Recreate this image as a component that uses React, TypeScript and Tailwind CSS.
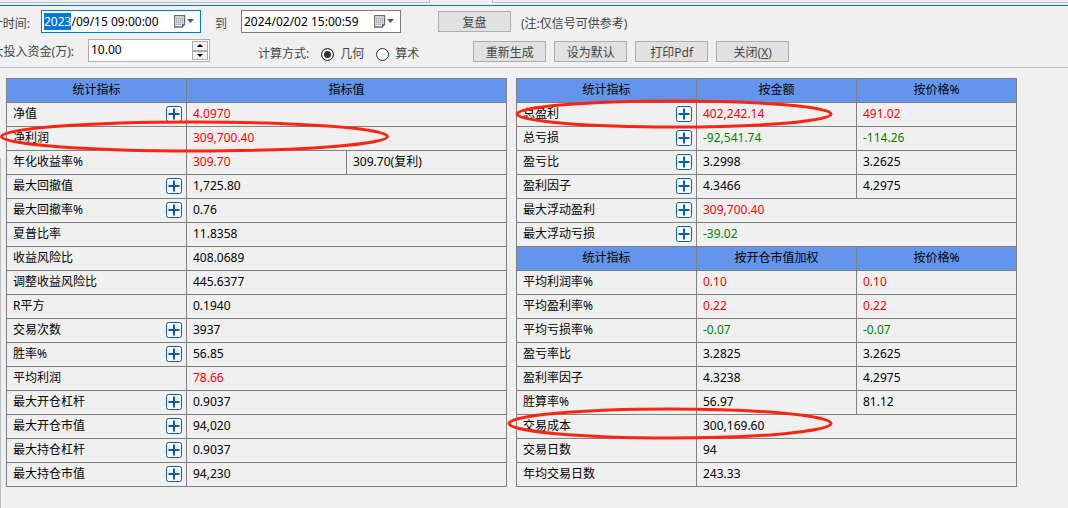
import React, { useEffect, useRef, useState } from 'react'

type Tone = 'up' | 'down'

interface Cell {
  text: string
  tone?: Tone
}

interface Row {
  label: string
  plus?: boolean
  cells: Cell[]
  header?: boolean
}

const up = (text: string): Cell => ({ text, tone: 'up' })
const down = (text: string): Cell => ({ text, tone: 'down' })
const plain = (text: string): Cell => ({ text })

const leftRows: Row[] = [
  { label: '统计指标', header: true, cells: [plain('指标值')] },
  { label: '净值', plus: true, cells: [up('4.0970')] },
  { label: '净利润', cells: [up('309,700.40')] },
  { label: '年化收益率%', cells: [up('309.70'), plain('309.70(复利)')] },
  { label: '最大回撤值', plus: true, cells: [plain('1,725.80')] },
  { label: '最大回撤率%', plus: true, cells: [plain('0.76')] },
  { label: '夏普比率', cells: [plain('11.8358')] },
  { label: '收益风险比', cells: [plain('408.0689')] },
  { label: '调整收益风险比', cells: [plain('445.6377')] },
  { label: 'R平方', cells: [plain('0.1940')] },
  { label: '交易次数', plus: true, cells: [plain('3937')] },
  { label: '胜率%', plus: true, cells: [plain('56.85')] },
  { label: '平均利润', cells: [up('78.66')] },
  { label: '最大开仓杠杆', plus: true, cells: [plain('0.9037')] },
  { label: '最大开仓市值', plus: true, cells: [plain('94,020')] },
  { label: '最大持仓杠杆', plus: true, cells: [plain('0.9037')] },
  { label: '最大持仓市值', plus: true, cells: [plain('94,230')] },
]

const rightRows: Row[] = [
  { label: '统计指标', header: true, cells: [plain('按金额'), plain('按价格%')] },
  { label: '总盈利', plus: true, cells: [up('402,242.14'), up('491.02')] },
  { label: '总亏损', plus: true, cells: [down('-92,541.74'), down('-114.26')] },
  { label: '盈亏比', plus: true, cells: [plain('3.2998'), plain('3.2625')] },
  { label: '盈利因子', plus: true, cells: [plain('4.3466'), plain('4.2975')] },
  { label: '最大浮动盈利', plus: true, cells: [up('309,700.40')] },
  { label: '最大浮动亏损', plus: true, cells: [down('-39.02')] },
  { label: '统计指标', header: true, cells: [plain('按开仓市值加权'), plain('按价格%')] },
  { label: '平均利润率%', cells: [up('0.10'), up('0.10')] },
  { label: '平均盈利率%', cells: [up('0.22'), up('0.22')] },
  { label: '平均亏损率%', cells: [down('-0.07'), down('-0.07')] },
  { label: '盈亏率比', cells: [plain('3.2825'), plain('3.2625')] },
  { label: '盈利率因子', cells: [plain('4.3238'), plain('4.2975')] },
  { label: '胜算率%', cells: [plain('56.97'), plain('81.12')] },
  { label: '交易成本', cells: [plain('300,169.60')] },
  { label: '交易日数', cells: [plain('94')] },
  { label: '年均交易日数', cells: [plain('243.33')] },
]

const toneClass = (tone?: Tone) =>
  tone === 'up' ? 'text-[#ff0000]' : tone === 'down' ? 'text-[#008000]' : 'text-black'

const PlusIcon = () => (
  <svg width="16" height="16" viewBox="0 0 16 16" fill="none">
    <rect x="0.5" y="0.5" width="15" height="15" rx="2" fill="#f7fbff" stroke="#0a5cb0" />
    <path d="M8 2.5v11M2.5 8h11" stroke="#0a5cb0" strokeWidth="2" />
  </svg>
)

const CalendarIcon = () => (
  <svg width="20" height="13" viewBox="0 0 20 13" fill="none">
    <path d="M0.5 0.5h10v9l-2.500 2.500h-7.500z" fill="#f2f0ee" stroke="#756a65" strokeWidth="1.4" />
    <path d="M2 2.500h7v7.500h-7z" fill="#9ca7bb" />
    <path
      d="M2 4.500h7M2 6.500h7M2 8.500h7M3.500 2.500v7.500M5.500 2.500v7.500M7.500 2.500v7.500"
      stroke="#eef1f6"
      strokeWidth="0.5"
    />
    <path d="M8 12v-2.500h2.500z" fill="#5d5551" />
    <path d="M13 4h7l-3.500 4z" fill="#44598c" />
  </svg>
)

const DateBox = ({
  label,
  value,
  active,
}: {
  label: string
  value: string
  active?: boolean
}) => {
  const [date, setDate] = useState(value)
  const ref = useRef<HTMLInputElement>(null)

  // the year part is selected as soon as the panel opens
  useEffect(() => {
    if (active && ref.current) {
      ref.current.focus()
      ref.current.setSelectionRange(0, 4)
    }
  }, [active])

  return (
    <div className="flex h-[23px] w-40 items-center border border-[#7a7a7a] bg-white pl-0.5 focus-within:border-[#0078d7]">
      <input
        ref={ref}
        aria-label={label}
        value={date}
        onChange={(e) => setDate(e.target.value)}
        className="h-[17px] min-w-0 flex-1 bg-transparent text-black outline-none selection:bg-[#0078d7] selection:text-white"
      />
      <button type="button" aria-label="选择日期" className="mr-1.5">
        <CalendarIcon />
      </button>
    </div>
  )
}

const ToolButton = ({ children }: { children: React.ReactNode }) => (
  <button
    type="button"
    className="h-[21px] w-[73px] border border-[#adadad] bg-[#e1e1e1] pt-0.5 leading-[17px] text-[#444444]"
  >
    {children}
  </button>
)

const StatTable = ({ rows }: { rows: Row[] }) => (
  <table className="w-full table-fixed border-collapse text-left">
    <colgroup>
      <col className="w-[180px]" />
      <col />
      <col />
    </colgroup>
    <tbody>
      {rows.map((row, i) =>
        row.header ? (
          <tr key={i} className="h-6 bg-[#6495ed]">
            <th className="border border-[#808080] p-0 pb-0.5 text-center font-normal">
              {row.label}
            </th>
            {row.cells.map((cell, j) => (
              <th
                key={j}
                colSpan={row.cells.length === 1 ? 2 : 1}
                className="border border-[#808080] p-0 pb-0.5 text-center font-normal"
              >
                {cell.text}
              </th>
            ))}
          </tr>
        ) : (
          <tr key={i} className="h-6">
            <th className="border border-[#808080] pt-0 pr-1 pb-0.5 pl-1.5 font-normal">
              <div className="flex items-center justify-between">
                {row.label}
                {row.plus && (
                  <button type="button" aria-label={`展开${row.label}`}>
                    <PlusIcon />
                  </button>
                )}
              </div>
            </th>
            {row.cells.map((cell, j) => (
              <td
                key={j}
                colSpan={row.cells.length === 1 ? 2 : 1}
                className={`border border-[#808080] px-1.5 pt-0 pb-0.5 ${toneClass(cell.tone)}`}
              >
                {cell.text}
              </td>
            ))}
          </tr>
        )
      )}
    </tbody>
  </table>
)

// red pen circles drawn over the rows that matter
const Marks = ({ items }: { items: { cx: number; cy: number; rx: number; ry: number }[] }) => (
  <svg
    className="pointer-events-none absolute inset-0 h-full w-full overflow-visible"
    fill="none"
    stroke="#ff2412"
    strokeWidth="3"
  >
    {items.map((m, i) => (
      <ellipse key={i} cx={m.cx} cy={m.cy} rx={m.rx} ry={m.ry} />
    ))}
  </svg>
)

const App = () => {
  const [capital, setCapital] = useState(10)
  const [method, setMethod] = useState('geo')

  return (
    <div className="flex min-h-screen flex-col overflow-hidden bg-[#f0f0f0] font-['Noto_Sans','Noto_Sans_CJK_SC',sans-serif] text-xs leading-4 text-black">
      <div className="flex h-[5px] justify-between">
        <div className="h-[3px] w-[430px] border-r border-b border-[#bcbcbc]" />
        <div className="ml-[62px] h-[3px] flex-1 border-b border-l border-[#bcbcbc]" />
      </div>

      <div className="h-[63px] border-t border-b border-t-[#1072c2] border-b-[#bcbcbc]">
        <div className="flex items-start pt-1">
          <div className="flex w-[41px] shrink-0 justify-end pt-1.5 pr-[11px] whitespace-nowrap text-[#444444]">
            计时间:
          </div>
          <DateBox label="开始时间" value="2023/09/15 09:00:00" active />
          <div className="w-10 pt-1.5 text-center text-[#444444]">到</div>
          <DateBox label="结束时间" value="2024/02/02 15:00:59" />
          <div className="ml-[37px] pt-px">
            <ToolButton>复盘</ToolButton>
          </div>
          <div className="ml-2.5 pt-1.5 text-[#444444]">(注:仅信号可供参考)</div>
        </div>

        <div className="flex items-start pt-1.5">
          <label
            htmlFor="capital"
            className="flex w-[88px] shrink-0 justify-end pt-[5px] pr-3.5 whitespace-nowrap text-[#444444]"
          >
            大投入资金(万):
          </label>
          <div className="flex h-[23px] w-[122px] border border-[#abadb3] bg-white p-px">
            <input
              id="capital"
              value={capital.toFixed(2)}
              onChange={(e) => setCapital(Number(e.target.value) || 0)}
              className="h-[17px] min-w-0 flex-1 bg-transparent pl-px text-black outline-none"
            />
            <div className="flex w-4 flex-col">
              <button
                type="button"
                aria-label="增加"
                onClick={() => setCapital(capital + 1)}
                className="flex flex-1 items-center justify-center border border-[#acacac] bg-[#f0f0f0]"
              >
                <svg width="6" height="3" viewBox="0 0 6 3">
                  <path d="M0 3h6L3 0z" fill="#000" />
                </svg>
              </button>
              <button
                type="button"
                aria-label="减少"
                onClick={() => setCapital(capital - 1)}
                className="flex flex-1 items-center justify-center border border-[#acacac] bg-[#f0f0f0]"
              >
                <svg width="6" height="3" viewBox="0 0 6 3">
                  <path d="M0 0h6L3 3z" fill="#000" />
                </svg>
              </button>
            </div>
          </div>

          <div className="ml-12 flex items-center pt-[7px] text-[#444444]">
            <span>计算方式:</span>
            {[
              { id: 'geo', text: '几何' },
              { id: 'math', text: '算术' },
            ].map((m) => (
              <label key={m.id} className="ml-3 flex items-center gap-1.5">
                <input
                  type="radio"
                  name="method"
                  checked={method === m.id}
                  onChange={() => setMethod(m.id)}
                  className="h-[13px] w-[13px] appearance-none rounded-full border border-[#333333] bg-white checked:bg-[#333333] checked:shadow-[inset_0_0_0_2px_#ffffff]"
                />
                {m.text}
              </label>
            ))}
          </div>

          <div className="ml-[54px] flex gap-2 pt-0.5">
            <ToolButton>重新生成</ToolButton>
            <ToolButton>设为默认</ToolButton>
            <ToolButton>打印Pdf</ToolButton>
            <ToolButton>
              关闭(<u>X</u>)
            </ToolButton>
          </div>
        </div>
      </div>

      <div className="relative flex flex-1 items-start gap-[9px] pt-2.5 pr-[51px] pl-1.5">
        {/* edge of the side panel */}
        <div className="absolute top-[90px] bottom-0 left-0 w-px bg-[#bcbcbc]" />
        <div className="relative flex-1">
          <StatTable rows={leftRows} />
          <Marks items={[{ cx: 188.5, cy: 58.5, rx: 193, ry: 14.5 }]} />
        </div>
        <div className="relative flex-1">
          <StatTable rows={rightRows} />
          <Marks
            items={[
              { cx: 158, cy: 36, rx: 157, ry: 13 },
              { cx: 154, cy: 345.5, rx: 161, ry: 14.5 },
            ]}
          />
        </div>
      </div>
    </div>
  )
}

export default App
